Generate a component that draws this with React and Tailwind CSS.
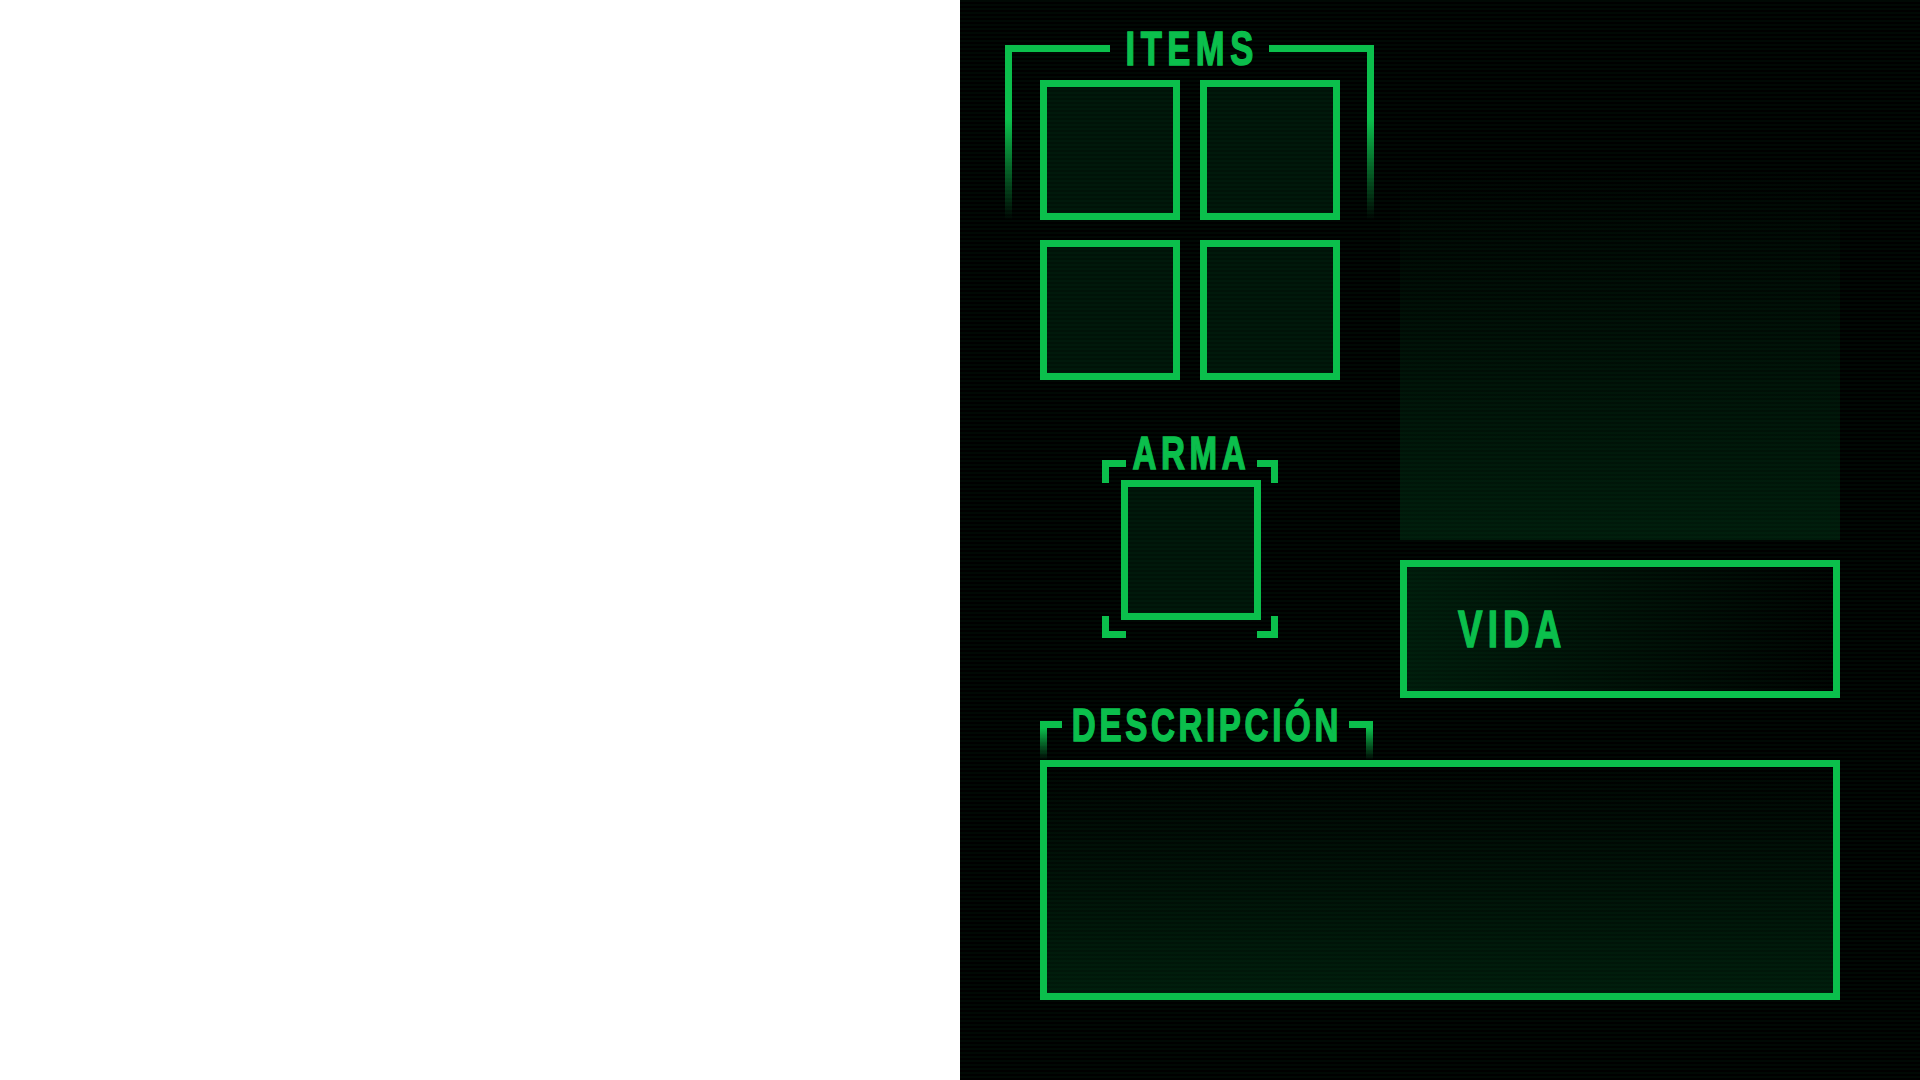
import React from "react";

function Label({ children, className = "", left = false }) {
  return (
    <span
      className={
        "inline-block shrink-0 whitespace-nowrap font-['Liberation_Sans',Arial,sans-serif] font-bold leading-none text-[#0bbf4c] [-webkit-text-stroke:1.5px_#0bbf4c] scale-x-[0.72] " +
        (left ? "origin-left " : "origin-center ") +
        className
      }
    >
      {children}
    </span>
  );
}

function Slot() {
  return <div className="h-[140px] w-[140px] border-[7px] border-[#0bbf4c] bg-[#00401a]/30" />;
}

export default function App() {
  return (
    <div className="flex h-screen w-full overflow-hidden">
      <div className="w-[960px] bg-white" />

      <div className="flex w-[960px] flex-col bg-black bg-[repeating-linear-gradient(to_bottom,rgba(0,255,110,0.035)_0px,rgba(0,255,110,0.035)_2px,transparent_2px,transparent_4px)] pl-[45px] pt-[45px]">
        <div className="flex gap-[26px]">
          {/* left column: items + weapon */}
          <div className="flex w-[369px] flex-col">
            <div className="flex h-[7px] items-center">
              <div className="h-[7px] w-[105px] shrink-0 bg-[#0bbf4c]" />
              <div className="flex min-w-0 flex-1 justify-center">
                <Label className="pl-[0.16em] text-[48px] tracking-[0.16em]">ITEMS</Label>
              </div>
              <div className="h-[7px] w-[105px] shrink-0 bg-[#0bbf4c]" />
            </div>
            <div className="flex items-start justify-between">
              <div className="h-[168px] w-[7px] bg-linear-to-b from-[#0bbf4c] from-40% to-transparent" />
              <div className="mt-[28px] grid grid-cols-2 gap-5">
                <Slot />
                <Slot />
                <Slot />
                <Slot />
              </div>
              <div className="h-[168px] w-[7px] bg-linear-to-b from-[#0bbf4c] from-40% to-transparent" />
            </div>

            <div className="mt-[50px] flex flex-col items-center">
              <Label className="relative z-10 -mb-[16px] pl-[0.14em] text-[46px] tracking-[0.14em]">ARMA</Label>
              <div className="relative h-[178px] w-[176px] pl-[19px] pt-[20px]">
                <div className="absolute left-0 top-0 h-[23px] w-[24px] border-l-[7px] border-t-[7px] border-[#0bbf4c]" />
                <div className="absolute right-0 top-0 h-[23px] w-[21px] border-r-[7px] border-t-[7px] border-[#0bbf4c]" />
                <div className="absolute bottom-0 left-0 h-[22px] w-[24px] border-b-[7px] border-l-[7px] border-[#0bbf4c]" />
                <div className="absolute bottom-0 right-0 h-[22px] w-[21px] border-b-[7px] border-r-[7px] border-[#0bbf4c]" />
                <Slot />
              </div>
            </div>
          </div>

          {/* right column: portrait + life */}
          <div className="flex w-[440px] flex-col">
            <div className="h-[495px] bg-linear-to-b from-transparent from-25% to-[#00401a]/40" />
            <div className="mt-[20px] flex h-[138px] items-center border-[7px] border-[#0bbf4c] bg-linear-to-r from-[#00401a]/40 to-transparent pl-[51px]">
              <Label left className="text-[51px] tracking-[0.14em]">VIDA</Label>
            </div>
          </div>
        </div>

        {/* description */}
        <div className="ml-[35px] mt-[23px] flex w-[800px] flex-col">
          <div className="flex h-[7px] w-[333px] items-center">
            <div className="h-[7px] w-[22px] shrink-0 bg-[#0bbf4c]" />
            <div className="flex min-w-0 flex-1 justify-center">
              <Label className="pl-[0.11em] text-[46px] tracking-[0.11em]">DESCRIPCIÓN</Label>
            </div>
            <div className="h-[7px] w-[24px] shrink-0 bg-[#0bbf4c]" />
          </div>
          <div className="flex w-[333px] justify-between">
            <div className="h-[32px] w-[7px] bg-linear-to-b from-[#0bbf4c] to-transparent" />
            <div className="h-[32px] w-[7px] bg-linear-to-b from-[#0bbf4c] to-transparent" />
          </div>
          <div className="h-[240px] border-[7px] border-[#0bbf4c] bg-linear-to-b from-transparent to-[#00401a]/40" />
        </div>
      </div>
    </div>
  );
}
